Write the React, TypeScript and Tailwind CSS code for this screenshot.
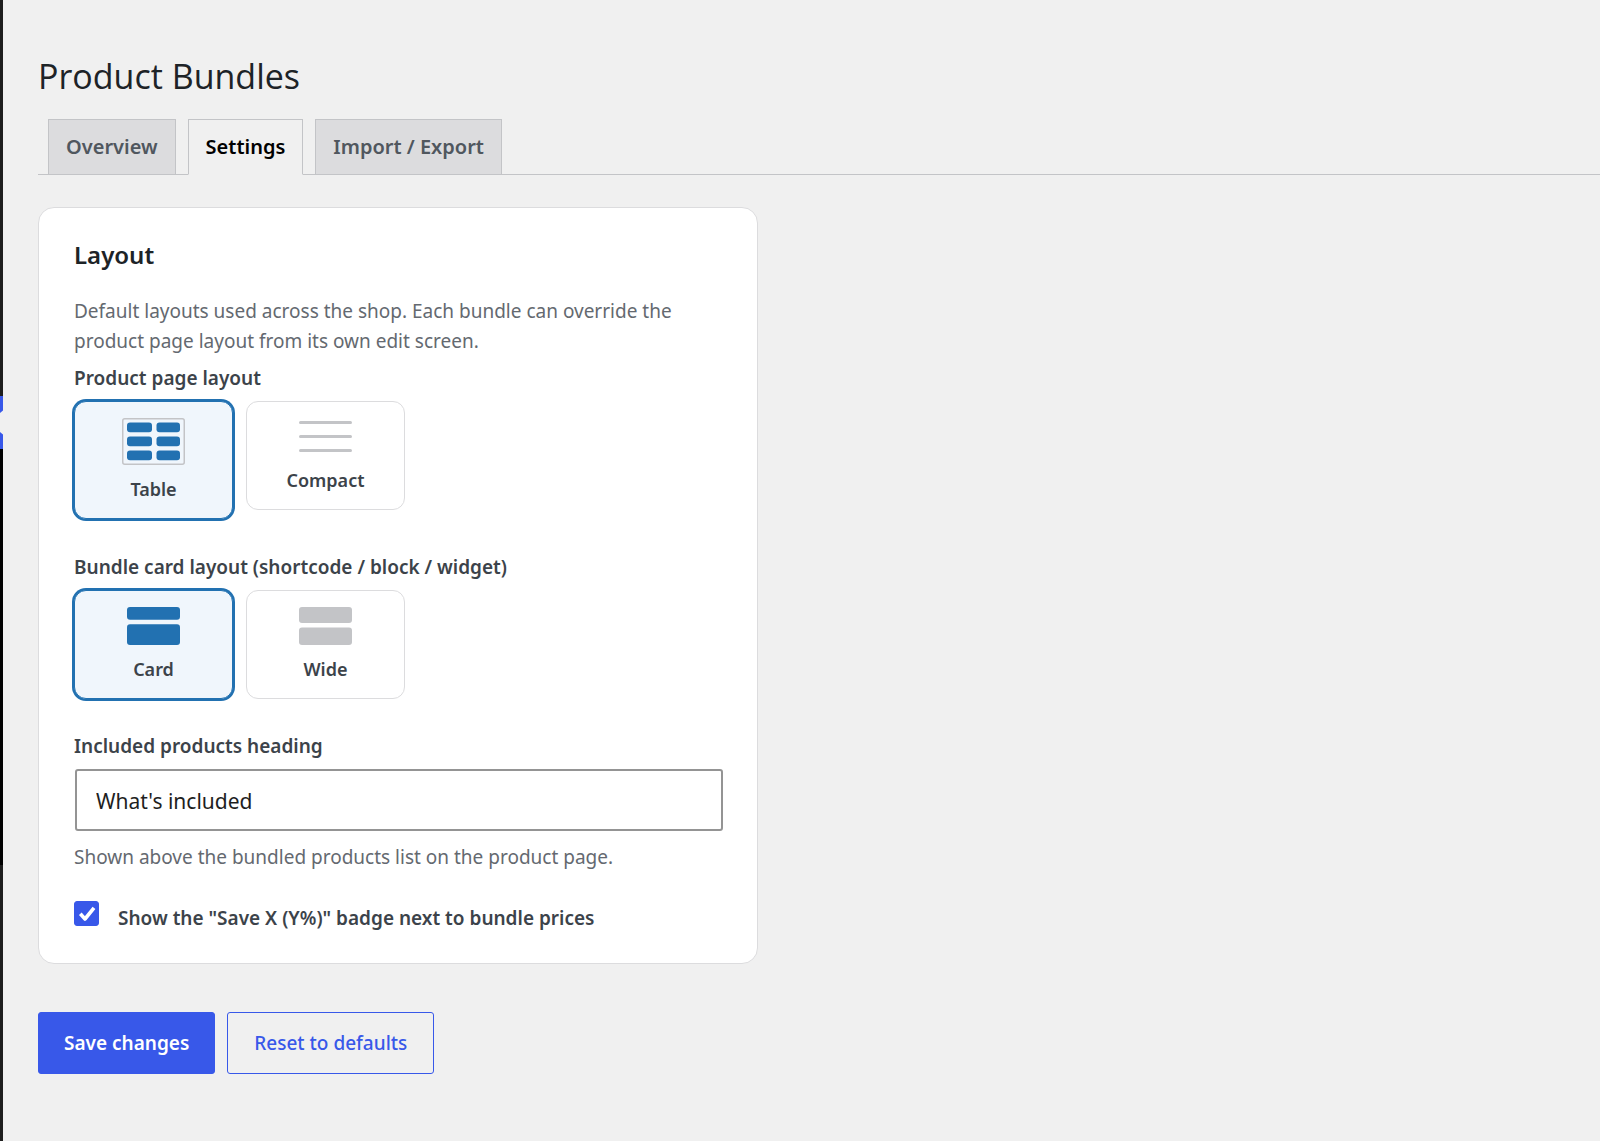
import { useState } from "react";
import type { ReactNode } from "react";

type TileProps = {
  name: string;
  label: string;
  checked: boolean;
  onSelect: () => void;
  children: ReactNode;
};

function Tile({ name, label, checked, onSelect, children }: TileProps) {
  return (
    <label
      className={
        "flex w-[159px] cursor-pointer flex-col items-center gap-3 rounded-xl border py-4 " +
        (checked
          ? "border-[#2271b1] bg-[#f0f6fc] ring-2 ring-[#2271b1]"
          : "border-[#dcdcde] bg-white")
      }
    >
      <input type="radio" name={name} checked={checked} onChange={onSelect} className="sr-only" />
      {children}
      <span className="text-[18px] leading-[25px] font-semibold text-[#3c434a]">{label}</span>
    </label>
  );
}

function TableIcon() {
  return (
    <svg width="63" height="47" viewBox="0 0 63 47" aria-hidden="true">
      <rect x="0.75" y="0.75" width="61.5" height="45.5" rx="2" fill="none" stroke="#c3c4c7" strokeWidth="1.5" />
      {[4.5, 18.5, 32.5].map((y) => (
        <g key={y} fill="#2271b1">
          <rect x="5" y={y} width="25" height="9.8" rx="3" />
          <rect x="34.5" y={y} width="23.5" height="9.8" rx="3" />
        </g>
      ))}
    </svg>
  );
}

function CompactIcon() {
  return (
    <svg width="53" height="38" viewBox="0 0 53 38" fill="#c3c4c7" aria-hidden="true">
      <rect y="3" width="53" height="3" rx="1.5" />
      <rect y="17" width="53" height="3" rx="1.5" />
      <rect y="31" width="53" height="3" rx="1.5" />
    </svg>
  );
}

function CardIcon() {
  return (
    <svg width="53" height="38" viewBox="0 0 53 38" fill="#2271b1" aria-hidden="true">
      <rect y="0" width="53" height="12.7" rx="3" />
      <rect y="17.3" width="53" height="20.7" rx="3" />
    </svg>
  );
}

function WideIcon() {
  return (
    <svg width="53" height="38" viewBox="0 0 53 38" fill="#c3c4c7" aria-hidden="true">
      <rect y="0" width="53" height="16" rx="3" />
      <rect y="20.5" width="53" height="17.5" rx="3" />
    </svg>
  );
}

function Sidebar() {
  return (
    <div className="flex w-[3px] shrink-0 flex-col bg-[#1e1e1e]">
      <div className="h-[396px]" />
      <svg width="3" height="53" viewBox="0 0 3 53" aria-hidden="true">
        <rect width="3" height="53" fill="#3858e9" />
        <path d="M0 17 L3 14.5 V38.5 L0 36 Z" fill="#f0f0f0" />
      </svg>
      <div className="h-[416px] bg-black" />
    </div>
  );
}

const tabs = ["Overview", "Settings", "Import / Export"];

export default function App() {
  const [tab, setTab] = useState("Settings");
  const [page, setPage] = useState("table");
  const [card, setCard] = useState("card");
  const [heading, setHeading] = useState("What's included");
  const [badge, setBadge] = useState(true);

  return (
    <div className="flex min-h-screen bg-[#f0f0f0] font-['Noto_Sans','Open_Sans',sans-serif] text-[#1d2327]">
      <Sidebar />
      <main className="min-w-0 flex-1 pt-[52px] pb-16 pl-[35px]">
        <h1 className="font-['Open_Sans','Noto_Sans',sans-serif] text-[34px] leading-[48px] font-normal">
          Product Bundles
        </h1>
        <nav className="mt-[19px] flex items-end gap-3 border-b border-[#c3c4c7] pl-[10px]">
          {tabs.map((t) => (
            <a
              key={t}
              href="#"
              onClick={() => setTab(t)}
              className={
                "border px-[17px] pt-[11px] pb-[11px] text-[20px] leading-[32px] font-semibold border-[#c3c4c7] " +
                (t === tab
                  ? "-mb-px border-b-[#f0f0f0] bg-[#f0f0f0] text-black"
                  : "border-b-0 bg-[#dcdcde] text-[#50575e]")
              }
            >
              {t}
            </a>
          ))}
        </nav>

        <section className="mt-8 flex w-[720px] flex-col rounded-2xl border border-[#dcdcde] bg-white px-[35px] pt-[30px] pb-7">
          <h2 className="text-[24px] leading-[34px] font-semibold">Layout</h2>
          <p className="mt-6 text-[19px] leading-[30px] text-[#646970]">
            Default layouts used across the shop. Each bundle can override the product page layout from its own
            edit screen.
          </p>

          <fieldset className="mt-[7px]">
            <legend className="text-[19px] leading-[30px] font-semibold text-[#3c434a]">Product page layout</legend>
            <div className="mt-2 flex items-start gap-[13px]">
              <Tile name="page" label="Table" checked={page === "table"} onSelect={() => setPage("table")}>
                <TableIcon />
              </Tile>
              <Tile name="page" label="Compact" checked={page === "compact"} onSelect={() => setPage("compact")}>
                <CompactIcon />
              </Tile>
            </div>
          </fieldset>

          <fieldset className="mt-[33px]">
            <legend className="text-[19px] leading-[30px] font-semibold text-[#3c434a]">
              Bundle card layout (shortcode / block / widget)
            </legend>
            <div className="mt-2 flex items-start gap-[13px]">
              <Tile name="card" label="Card" checked={card === "card"} onSelect={() => setCard("card")}>
                <CardIcon />
              </Tile>
              <Tile name="card" label="Wide" checked={card === "wide"} onSelect={() => setCard("wide")}>
                <WideIcon />
              </Tile>
            </div>
          </fieldset>

          <label htmlFor="heading" className="mt-8 text-[19px] leading-[30px] font-semibold text-[#3c434a]">
            Included products heading
          </label>
          <input
            id="heading"
            type="text"
            value={heading}
            onChange={(e) => setHeading(e.target.value)}
            className="mt-2 -mr-px ml-px h-[62px] rounded-[3px] border-2 border-[#949494] bg-white px-[19px] pt-0.5 text-[21px] text-[#1e1e1e]"
          />
          <p className="mt-[11px] text-[19px] leading-[30px] text-[#646970]">
            Shown above the bundled products list on the product page.
          </p>

          <label className="mt-[29px] flex items-start gap-[19px] text-[19px] leading-[34px] font-semibold text-[#3c434a]">
            <span className="relative flex size-[25px] shrink-0">
              <input
                type="checkbox"
                checked={badge}
                onChange={(e) => setBadge(e.target.checked)}
                className="peer size-[25px] appearance-none rounded-[3px] border border-[#949494] bg-white checked:border-[#3858e9] checked:bg-[#3858e9]"
              />
              <svg
                viewBox="0 0 25 25"
                className="pointer-events-none absolute inset-0 hidden peer-checked:block"
                aria-hidden="true"
              >
                <path
                  d="M6.3 12.8 L11 18 L20 6.8"
                  fill="none"
                  stroke="#fff"
                  strokeWidth="3.6"
                  strokeLinejoin="round"
                />
              </svg>
            </span>
            Show the "Save X (Y%)" badge next to bundle prices
          </label>
        </section>

        <div className="mt-12 flex gap-3">
          <button
            type="button"
            className="h-[62px] rounded-[3px] border border-[#3858e9] bg-[#3858e9] px-[25px] text-[19px] font-semibold text-white"
          >
            Save changes
          </button>
          <button
            type="button"
            className="h-[62px] rounded-[3px] border border-[#3858e9] px-[26px] text-[19px] font-medium text-[#3858e9]"
          >
            Reset to defaults
          </button>
        </div>
      </main>
    </div>
  );
}
